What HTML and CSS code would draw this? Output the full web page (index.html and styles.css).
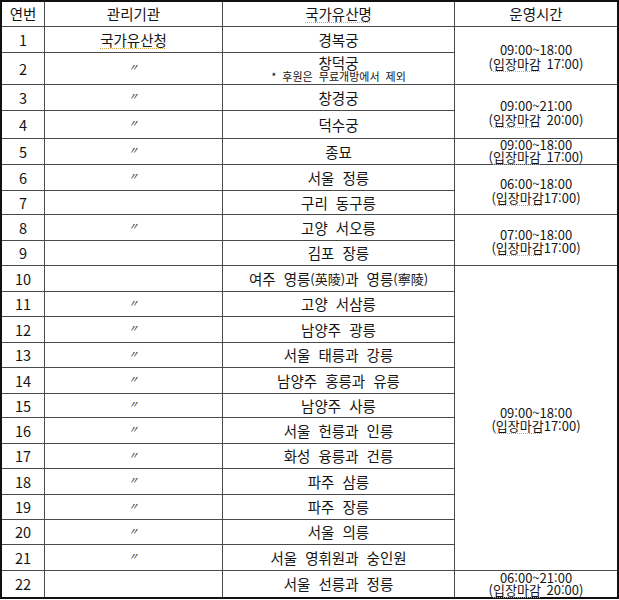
FILE: index.html
```html
<!DOCTYPE html>
<html lang="ko">
<head>
<meta charset="utf-8">
<title>국가유산 운영시간</title>
<link rel="stylesheet" href="styles.css">
</head>
<body>
<div class="sheet">
  <div class="cell">연번</div>
  <div class="cell">관리기관</div>
  <div class="cell"><span class="spell">국가유산명</span></div>
  <div class="cell">운영시간</div>

  <div class="cell">1</div>
  <div class="cell"><span class="spell">국가유산청</span></div>
  <div class="cell">경복궁</div>
  <div class="cell time span2"><span>09:00~18:00</span><span>(<span class="spell">입장마감</span> 17:00)</span></div>

  <div class="cell">2</div>
  <div class="cell ditto">〃</div>
  <div class="cell stack"><span>창덕궁</span><span class="note">* 후원은 무료개방에서 제외</span></div>

  <div class="cell">3</div>
  <div class="cell ditto">〃</div>
  <div class="cell">창경궁</div>
  <div class="cell time span2"><span>09:00~21:00</span><span>(<span class="spell">입장마감</span> 20:00)</span></div>

  <div class="cell">4</div>
  <div class="cell ditto">〃</div>
  <div class="cell">덕수궁</div>

  <div class="cell">5</div>
  <div class="cell ditto">〃</div>
  <div class="cell">종묘</div>
  <div class="cell time single"><span>09:00~18:00</span><span>(<span class="spell">입장마감</span> 17:00)</span></div>

  <div class="cell">6</div>
  <div class="cell ditto">〃</div>
  <div class="cell">서울 정릉</div>
  <div class="cell time span2"><span>06:00~18:00</span><span>(<span class="spell">입장마감</span>17:00)</span></div>

  <div class="cell">7</div>
  <div class="cell"></div>
  <div class="cell">구리 동구릉</div>

  <div class="cell">8</div>
  <div class="cell ditto">〃</div>
  <div class="cell">고양 서오릉</div>
  <div class="cell time span2"><span>07:00~18:00</span><span>(<span class="spell">입장마감</span>17:00)</span></div>

  <div class="cell">9</div>
  <div class="cell"></div>
  <div class="cell">김포 장릉</div>

  <div class="cell">10</div>
  <div class="cell"></div>
  <div class="cell">여주 영릉<span class="hanja">(英陵)</span>과 영릉<span class="hanja">(寧陵)</span></div>
  <div class="cell time span12"><span>09:00~18:00</span><span>(<span class="spell">입장마감</span>17:00)</span></div>

  <div class="cell">11</div>
  <div class="cell ditto">〃</div>
  <div class="cell">고양 서삼릉</div>

  <div class="cell">12</div>
  <div class="cell ditto">〃</div>
  <div class="cell">남양주 광릉</div>

  <div class="cell">13</div>
  <div class="cell ditto">〃</div>
  <div class="cell">서울 태릉과 강릉</div>

  <div class="cell">14</div>
  <div class="cell ditto">〃</div>
  <div class="cell">남양주 홍릉과 유릉</div>

  <div class="cell">15</div>
  <div class="cell ditto">〃</div>
  <div class="cell">남양주 사릉</div>

  <div class="cell">16</div>
  <div class="cell ditto">〃</div>
  <div class="cell">서울 헌릉과 인릉</div>

  <div class="cell">17</div>
  <div class="cell ditto">〃</div>
  <div class="cell">화성 융릉과 건릉</div>

  <div class="cell">18</div>
  <div class="cell ditto">〃</div>
  <div class="cell">파주 삼릉</div>

  <div class="cell">19</div>
  <div class="cell ditto">〃</div>
  <div class="cell">파주 장릉</div>

  <div class="cell">20</div>
  <div class="cell ditto">〃</div>
  <div class="cell">서울 의릉</div>

  <div class="cell">21</div>
  <div class="cell ditto">〃</div>
  <div class="cell">서울 영휘원과 숭인원</div>

  <div class="cell">22</div>
  <div class="cell"></div>
  <div class="cell">서울 선릉과 정릉</div>
  <div class="cell time single"><span>06:00~21:00</span><span>(<span class="spell">입장마감</span> 20:00)</span></div>
</div>
</body>
</html>
```

FILE: styles.css
```css
html, body {
  margin: 0;
  padding: 0;
  background: #ffffff;
}

body {
  font-family: "Noto Sans CJK KR", "Noto Sans", sans-serif;
  color: #141414;
}

.sheet {
  width: 619px;
  box-sizing: border-box;
  border: 2px solid #111111;
  background: #4a4a4a;
  display: grid;
  grid-template-columns: 42px 177px 231px 162px;
  grid-template-rows: 24px 25px 31px 25px 27px 25px 25px 23px 25px 24px 25px 24px 25px 24px 25px 23px 25px 24px 25px 24px 24px 25px 26px;
  gap: 1px;
}

.cell {
  background: #ffffff;
  display: flex;
  align-items: center;
  justify-content: center;
  text-align: center;
  font-size: 14.5px;
  line-height: 16px;
  word-spacing: 4px;
  white-space: nowrap;
}

.ditto {
  font-size: 10px;
  color: #2a2a2a;
  font-style: italic;
  padding-bottom: 3px;
}

.stack {
  flex-direction: column;
  line-height: 14px;
  padding-top: 1px;
}

.note {
  font-size: 11px;
  line-height: 13px;
  word-spacing: 3px;
}

.hanja {
  font-size: 13px;
  word-spacing: 0;
}

.time {
  grid-column: 4;
  flex-direction: column;
  font-size: 13px;
  line-height: 13.5px;
  word-spacing: 2px;
  padding-top: 2px;
}

.time.single {
  line-height: 12px;
  padding-top: 0;
  padding-bottom: 1px;
}

.span2 {
  grid-row: span 2;
}

.span12 {
  grid-row: span 12;
}

.spell {
  text-decoration-line: underline;
  text-decoration-style: dotted;
  text-decoration-color: #d8a548;
  text-decoration-thickness: 1px;
  text-underline-offset: 2px;
}
```
